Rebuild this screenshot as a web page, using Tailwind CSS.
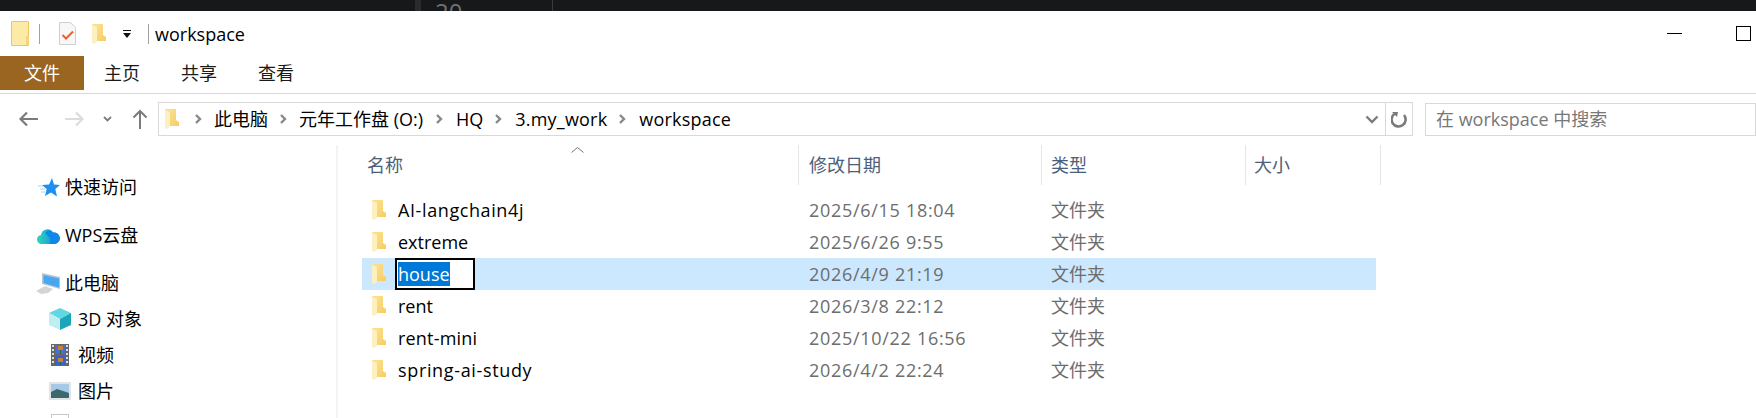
<!DOCTYPE html>
<html lang="zh-CN">
<head>
    <meta charset="UTF-8">
    <title>workspace</title>
    <script src="https://cdn.jsdelivr.net/npm/@tailwindcss/browser@4"></script>
</head>
<body class="bg-white overflow-hidden">
<svg class="absolute w-0 h-0">
    <defs>
        <linearGradient id="fg" x1="0" y1="0" x2="1" y2="1">
            <stop offset="0" stop-color="#fbe39a"/>
            <stop offset="1" stop-color="#f6cd62"/>
        </linearGradient>
    </defs>
    <symbol id="folder" viewBox="0 0 14 20">
        <path d="M0 0h11v11l3 2v4H0z" fill="url(#fg)"/>
        <path d="M0 1l5 2v15l-3 2-2-1z" fill="#fdf0c0"/>
    </symbol>
    <symbol id="chev" viewBox="0 0 7 10">
        <path d="M1 1l4 4-4 4" fill="none" stroke="#888" stroke-width="2.400"/>
    </symbol>
</svg>
<div class="w-[1756px] h-[418px] overflow-hidden flex flex-col text-[18px] text-black font-['Open_Sans','Noto_Sans_CJK_SC',sans-serif]">
    <!-- top strip from the window behind -->
    <div class="h-[11px] bg-[#17181a] flex overflow-hidden shrink-0">
        <div class="ml-[415px] w-[6px] bg-[#2a2b2d]"></div>
        <div class="ml-[14px] w-[30px] text-[#6e7176] text-[24px] leading-none">20</div>
        <div class="ml-[87px] w-px bg-[#3a3b3e]"></div>
    </div>

    <!-- title bar -->
    <div class="h-[45px] flex items-center shrink-0">
        <svg class="ml-[11px] w-[19px] h-[25px]" viewBox="0 0 19 25"><path d="M.5.5h17v24H.5z" fill="#fdeaa6" stroke="#eec560"/><path d="M15 15h3v9h-3z" fill="#f5d47a"/></svg>
        <div class="ml-[9px] w-px h-5 bg-[#a0a0a0]"></div>
        <svg class="ml-[19px] w-[17px] h-[23px]" viewBox="0 0 17 23"><path d="M.5.5h11l5 5v17H.5z" fill="#f7f7f7" stroke="#cfcfcf"/><path d="M3.500 13l3.500 3.500 7-7" fill="none" stroke="#f0602a" stroke-width="2"/></svg>
        <svg class="ml-[16px] w-[14px] h-[20px]"><use href="#folder"/></svg>
        <svg class="ml-[17px] w-[8px] h-[8px]" viewBox="0 0 8 8"><path d="M0 0h8v1H0zM0 3h8L4 8z" fill="#111"/></svg>
        <div class="ml-[17px] w-px h-5 bg-[#a0a0a0]"></div>
        <div class="ml-[6px] leading-none">workspace</div>
        <!-- minimize, maximize -->
        <div class="ml-auto w-[15px] h-px bg-black mr-[54px]"></div>
        <div class="w-[15px] h-[15px] border border-black mr-[5px]"></div>
    </div>

    <!-- ribbon tabs -->
    <div class="h-[34px] flex items-center shrink-0 text-[#1a1a1a]">
        <div class="w-[84px] h-full bg-[#9a6520] text-white flex items-center justify-center">文件</div>
        <div class="ml-[20px]">主页</div>
        <div class="ml-[41px]">共享</div>
        <div class="ml-[41px]">查看</div>
    </div>
    <div class="mt-[3px] h-px bg-[#d9d9d9] shrink-0"></div>

    <!-- address row -->
    <div class="mt-[8px] h-[34px] flex items-center shrink-0">
        <svg class="ml-[19px] w-[20px] h-[16px]" viewBox="0 0 20 16"><path d="M19 8H2M8 1.500L1.500 8 8 14.500" fill="none" stroke="#7b7b7b" stroke-width="2.200"/></svg>
        <svg class="ml-[25px] w-[20px] h-[16px]" viewBox="0 0 20 16"><path d="M1 8h17M12 1.500L18.500 8 12 14.500" fill="none" stroke="#dcdcdc" stroke-width="2.200"/></svg>
        <svg class="ml-[19px] w-[9px] h-[6px]" viewBox="0 0 9 6"><path d="M1 1l3.500 3.500L8 1" fill="none" stroke="#7b7b7b" stroke-width="1.800"/></svg>
        <svg class="ml-[20px] w-[16px] h-[20px]" viewBox="0 0 16 20"><path d="M8 20V2M1.500 8.500L8 2l6.500 6.500" fill="none" stroke="#7b7b7b" stroke-width="2"/></svg>
        <div class="ml-[10px] w-[1255px] h-full border border-[#d9d9d9] flex items-center">
            <svg class="ml-[6px] w-[14px] h-[20px]"><use href="#folder"/></svg>
            <svg class="ml-[16px] w-[7px] h-[10px]"><use href="#chev"/></svg>
            <span class="ml-[12px]">此电脑</span>
            <svg class="ml-[12px] w-[7px] h-[10px]"><use href="#chev"/></svg>
            <span class="ml-[12px]">元年工作盘 (O:)</span>
            <svg class="ml-[13px] w-[7px] h-[10px]"><use href="#chev"/></svg>
            <span class="ml-[13px]">HQ</span>
            <svg class="ml-[12px] w-[7px] h-[10px]"><use href="#chev"/></svg>
            <span class="ml-[13px] tracking-[0.2px]">3.my_work</span>
            <svg class="ml-[12px] w-[7px] h-[10px]"><use href="#chev"/></svg>
            <span class="ml-[13px] tracking-[0.2px]">workspace</span>
            <svg class="ml-auto mr-[6px] w-[14px] h-[9px]" viewBox="0 0 14 9"><path d="M1.500 1.500L7 7l5.500-5.500" fill="none" stroke="#7b7b7b" stroke-width="2.400"/></svg>
            <div class="w-px h-full bg-[#d9d9d9]"></div>
            <svg class="mx-[5px] w-[16px] h-[18px]" viewBox="0 0 16 18"><path d="M4 3.500A7 7 0 1 0 13 5" fill="none" stroke="#7b7b7b" stroke-width="2.600"/><path d="M1 2l6 0-1 5z" fill="#7b7b7b"/></svg>
        </div>
        <div class="ml-[12px] flex-1 h-[33px] border border-[#d9d9d9] flex items-center pl-[10px] text-[#777]">在 workspace 中搜索</div>
    </div>

    <!-- main -->
    <div class="flex flex-1 mt-[9px] min-h-0">
        <!-- nav tree -->
        <div class="w-[338px] shrink-0 border-r-2 border-[#f3f3f3] pt-[24px]">
            <div class="h-9 flex items-center pl-[38px]">
                <svg class="w-[22px] h-[19px]" viewBox="0 0 22 19"><path d="M14 0l2 6.500 6 .5-4.700 4 1.700 7.500-6-4-6 3.500 1.700-7L4 7l7-.5z" fill="#1e90f0"/><path d="M0 8h5M2 11h5M3 14h4" stroke="#a8d6f8"/></svg>
                <span class="ml-[5px]">快速访问</span>
            </div>
            <div class="mt-3 h-9 flex items-center pl-[37px]">
                <svg class="w-[23px] h-[17px]" viewBox="0 0 23 17"><defs><linearGradient id="cl" x1="0" y1="0" x2="1" y2="0"><stop offset="0" stop-color="#2fd8b8"/><stop offset="1" stop-color="#0f7fe8"/></linearGradient></defs><path d="M5 17A4.500 4.500 0 0 1 4 8 6.500 6.500 0 0 1 16 5.500 5.800 5.800 0 0 1 18 17z" fill="url(#cl)"/><path d="M8 6a5 5 0 0 1 8-.5 5.800 5.800 0 0 1 2 11.500h-6a5 5 0 0 0 0-7z" fill="#0f86ea"/></svg>
                <span class="ml-[5px]">WPS云盘</span>
            </div>
            <div class="mt-3 h-9 flex items-center pl-[36px]">
                <svg class="w-[24px] h-[21px]" viewBox="0 0 24 21"><path d="M6 0l18 4v12L6 11z" fill="#b8c4ce"/><path d="M7.500 2L23 5.500v9L7.500 10z" fill="#46a8f0"/><path d="M0 18l9-5 8 3-5 4-7 1z" fill="#d4d4d4"/></svg>
                <span class="ml-[5px]">此电脑</span>
            </div>
            <div class="h-9 flex items-center pl-[49px]">
                <svg class="w-[22px] h-[22px]" viewBox="0 0 22 22"><path d="M11 0l11 5-11 6L0 5z" fill="#5fd8e4"/><path d="M0 5l11 6v11L0 17z" fill="#bfeef2"/><path d="M22 5l-11 6v11l11-5z" fill="#1aa5b8"/></svg>
                <span class="ml-[7px]">3D 对象</span>
            </div>
            <div class="h-9 flex items-center pl-[51px]">
                <svg class="w-[18px] h-[22px]" viewBox="0 0 18 22"><path d="M0 0h18v22H0z" fill="#666"/><path d="M1 2h2M1 6h2M1 10h2M1 14h2M1 18h2M15 2h2M15 6h2M15 10h2M15 14h2M15 18h2" stroke="#ddd" stroke-width="2"/><path d="M4 1h10v9H4z" fill="#4a6fd0"/><path d="M4 12h10v9H4z" fill="#3a62c8"/><path d="M7 2h5v4H7zM7 14h5v4H7z" fill="#c8803a"/><path d="M9 6h1v4H9zM9 18h1v3H9z" fill="#2f6a3a"/></svg>
                <span class="ml-[9px]">视频</span>
            </div>
            <div class="h-9 flex items-center pl-[49px]">
                <svg class="w-[22px] h-[18px]" viewBox="0 0 22 18"><path d="M0 0h22v18H0z" fill="#e4e4e4"/><path d="M2 2h18v14H2z" fill="#a8c8e8"/><path d="M2 10l6-3 12 4v5H2z" fill="#3a6a70"/></svg>
                <span class="ml-[7px]">图片</span>
            </div>
            <div class="pl-[51px] pt-[5px]"><div class="w-[18px] h-[8px] border border-[#c8c8c8]"></div></div>
        </div>

        <!-- file list -->
        <div class="flex-1 pl-[24px]">
            <div class="relative h-[40px] flex text-[#4c607a]">
                <svg class="absolute left-[209px] top-[2px] w-[13px] h-[6px]" viewBox="0 0 13 6"><path d="M.5 5.500L6.500.5l6 5" fill="none" stroke="#777"/></svg>
                <div class="w-[437px] pl-[5px] flex items-center border-r border-[#e5e5e5]">名称</div>
                <div class="w-[243px] pl-[10px] flex items-center border-r border-[#e5e5e5]">修改日期</div>
                <div class="w-[204px] pl-[9px] flex items-center border-r border-[#e5e5e5]">类型</div>
                <div class="w-[135px] pl-[8px] flex items-center border-r border-[#e5e5e5]">大小</div>
            </div>
            <div class="mt-[9px] w-[1014px]">
                <div class="h-[32px] flex items-center">
                    <svg class="ml-[10px] w-[14px] h-[20px]"><use href="#folder"/></svg>
                    <div class="ml-[9px] w-[404px] pl-[3px] tracking-[0.6px]">AI-langchain4j</div>
                    <div class="w-[243px] pl-[10px] text-[#6d6d6d] tracking-[0.7px]">2025/6/15 18:04</div>
                    <div class="pl-[9px] text-[#6d6d6d]">文件夹</div>
                </div>
                <div class="h-[32px] flex items-center">
                    <svg class="ml-[10px] w-[14px] h-[20px]"><use href="#folder"/></svg>
                    <div class="ml-[9px] w-[404px] pl-[3px]">extreme</div>
                    <div class="w-[243px] pl-[10px] text-[#6d6d6d] tracking-[0.7px]">2025/6/26 9:55</div>
                    <div class="pl-[9px] text-[#6d6d6d]">文件夹</div>
                </div>
                <div class="h-[32px] flex items-center bg-[#cce8ff]">
                    <svg class="ml-[10px] w-[14px] h-[20px]"><use href="#folder"/></svg>
                    <div class="ml-[9px] w-[404px]">
                        <div class="w-[80px] h-[32px] border-2 border-black bg-white flex items-center pl-[1px]"><span class="bg-[#0078d7] text-white leading-[24px]">house</span></div>
                    </div>
                    <div class="w-[243px] pl-[10px] text-[#6d6d6d] tracking-[0.7px]">2026/4/9 21:19</div>
                    <div class="pl-[9px] text-[#6d6d6d]">文件夹</div>
                </div>
                <div class="h-[32px] flex items-center">
                    <svg class="ml-[10px] w-[14px] h-[20px]"><use href="#folder"/></svg>
                    <div class="ml-[9px] w-[404px] pl-[3px]">rent</div>
                    <div class="w-[243px] pl-[10px] text-[#6d6d6d] tracking-[0.7px]">2026/3/8 22:12</div>
                    <div class="pl-[9px] text-[#6d6d6d]">文件夹</div>
                </div>
                <div class="h-[32px] flex items-center">
                    <svg class="ml-[10px] w-[14px] h-[20px]"><use href="#folder"/></svg>
                    <div class="ml-[9px] w-[404px] pl-[3px] tracking-[0.2px]">rent-mini</div>
                    <div class="w-[243px] pl-[10px] text-[#6d6d6d] tracking-[0.7px]">2025/10/22 16:56</div>
                    <div class="pl-[9px] text-[#6d6d6d]">文件夹</div>
                </div>
                <div class="h-[32px] flex items-center">
                    <svg class="ml-[10px] w-[14px] h-[20px]"><use href="#folder"/></svg>
                    <div class="ml-[9px] w-[404px] pl-[3px] tracking-[0.65px]">spring-ai-study</div>
                    <div class="w-[243px] pl-[10px] text-[#6d6d6d] tracking-[0.7px]">2026/4/2 22:24</div>
                    <div class="pl-[9px] text-[#6d6d6d]">文件夹</div>
                </div>
            </div>
        </div>
    </div>
</div>
</body>
</html>
